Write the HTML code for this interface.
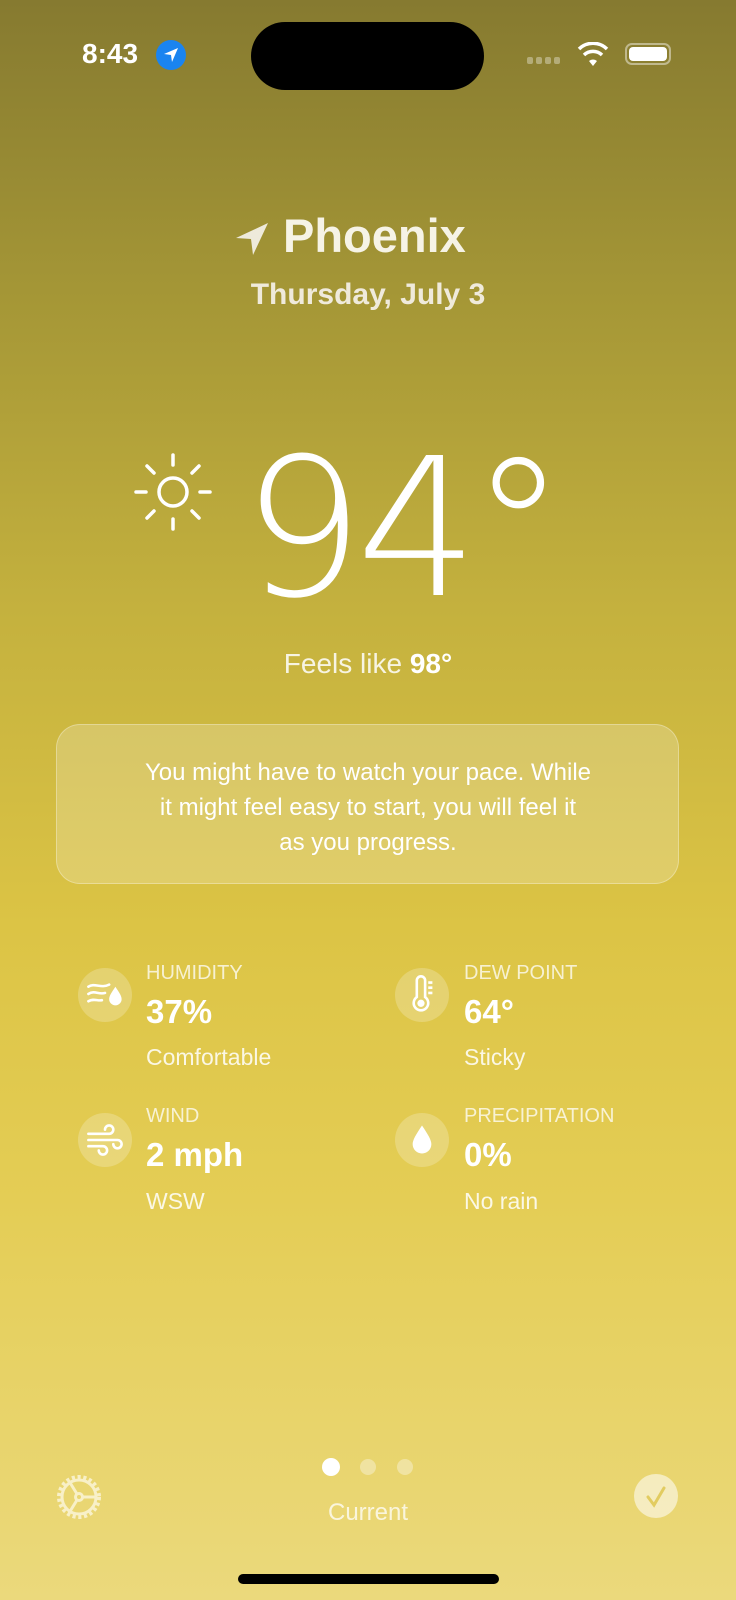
<!DOCTYPE html>
<html><head><meta charset="utf-8"><style>
*{margin:0;padding:0;box-sizing:border-box}
body{width:736px;height:1600px;overflow:hidden;font-family:"Liberation Sans",sans-serif;color:#fff;
background:linear-gradient(180deg,#867a30 0%,#a49636 18%,#c4b13e 38%,#dcc445 58%,#e4cd55 75%,#ebd97c 100%);position:relative}
.a{position:absolute}
.c{text-align:center;width:736px;left:0}
.lab{font-size:20px;color:rgba(255,255,255,.75)}
.val{font-size:33px;font-weight:bold}
.sub{font-size:23px;color:rgba(255,255,255,.85)}
.ic{width:54px;height:54px;border-radius:50%;background:rgba(255,255,255,.22)}
</style></head><body>
<div class="a" style="left:82px;top:38px;font-size:28px;font-weight:bold">8:43</div>
<div class="a" style="left:156px;top:40px;width:30px;height:30px;border-radius:50%;background:#1a84f0"><svg width="30" height="30" viewBox="0 0 30 30"><path d="M22 8 L8 14 L15 15 L16 22 Z" fill="#fff"/></svg></div>
<div class="a" style="left:251px;top:22px;width:233px;height:68px;border-radius:34px;background:#000"></div>
<div class="a" style="left:527px;top:51px;width:36px;height:7px;"><svg width="36" height="7"><g fill="rgba(255,255,255,.35)"><rect x="0" y="0" width="6" height="7" rx="2"/><rect x="9" y="0" width="6" height="7" rx="2"/><rect x="18" y="0" width="6" height="7" rx="2"/><rect x="27" y="0" width="6" height="7" rx="2"/></g></svg></div>
<svg class="a" style="left:577px;top:42px" width="32" height="26" viewBox="0 0 32 26"><path d="M16 24 L12 19 A6 6 0 0 1 20 19 Z" fill="#fff"/><path d="M7 13 A13 13 0 0 1 25 13" stroke="#fff" stroke-width="3.5" fill="none"/><path d="M2 7 A20 20 0 0 1 30 7" stroke="#fff" stroke-width="3.5" fill="none"/></svg>
<div class="a" style="left:625px;top:43px;width:46px;height:22px;border:2px solid rgba(255,255,255,.45);border-radius:7px;padding:2px"><div style="width:100%;height:100%;background:#fff;border-radius:4px"></div></div>
<svg class="a" style="left:234px;top:221px" width="36" height="36" viewBox="0 0 36 36"><path d="M34 2 L2 17 L17 18 L19 34 Z" fill="#eeeadb"/></svg>
<div class="a" style="left:283px;top:208px;font-size:47px;font-weight:bold;color:#f6f3e6">Phoenix</div>
<div class="a c" style="top:278px;font-size:30px;font-weight:bold;color:#efeadb">Thursday, July 3</div>
<svg class="a" style="left:131px;top:450px" width="84" height="84" viewBox="0 0 84 84"><g stroke="#fff" stroke-width="3.5" stroke-linecap="round" fill="none"><circle cx="42" cy="42" r="14"/><path d="M42 5v10M42 69v10M5 42h10M69 42h10M16 16l7 7M61 61l7 7M68 16l-7 7M23 61l-7 7"/></g></svg>
<div class="a" style="left:242px;top:424px;font-size:192px;font-family:'DejaVu Sans','Liberation Sans',sans-serif;font-weight:200;letter-spacing:-8px;line-height:1.1">94°</div>
<div class="a c" style="top:648px;font-size:28px;color:rgba(255,255,255,.85)">Feels like <b style="color:#fff">98°</b></div>
<div class="a" style="left:56px;top:724px;width:623px;height:160px;border-radius:24px;background:rgba(255,255,255,.2);border:1.5px solid rgba(255,255,255,.3)"></div>
<div class="a c" style="top:755px;font-size:24px;line-height:35px">You might have to watch your pace. While<br>it might feel easy to start, you will feel it<br>as you progress.</div>

<div class="a ic" style="left:78px;top:968px"><svg width="54" height="54" viewBox="0 0 52 52"><g stroke="#fff" stroke-width="2.5" fill="none" stroke-linecap="round"><path d="M10 18c6-4 12 2 20-2M10 25c6-4 10 1 16-1M10 32c5-3 9 0 13-1"/></g><path d="M36 18c4 6 6 9 6 12a6 6 0 0 1-12 0c0-3 2-6 6-12z" fill="#fff"/></svg></div>
<div class="a lab" style="left:146px;top:962px">HUMIDITY</div>
<div class="a val" style="left:146px;top:993px">37%</div>
<div class="a sub" style="left:146px;top:1044px">Comfortable</div>

<div class="a ic" style="left:395px;top:968px"><svg width="54" height="54" viewBox="0 0 52 52"><g stroke="#fff" stroke-width="2.5" fill="none"><path d="M21 12a4 4 0 0 1 8 0v16a7 7 0 1 1-8 0z"/><path d="M32 14h4M32 19h4M32 24h4"/></g><circle cx="25" cy="34" r="3.5" fill="#fff"/></svg></div>
<div class="a lab" style="left:464px;top:962px">DEW POINT</div>
<div class="a val" style="left:464px;top:993px">64°</div>
<div class="a sub" style="left:464px;top:1044px">Sticky</div>

<div class="a ic" style="left:78px;top:1113px"><svg width="54" height="54" viewBox="0 0 52 52"><g stroke="#fff" stroke-width="2.5" fill="none" stroke-linecap="round"><path d="M10 20h20a4 4 0 1 0-4-4M10 26h28a4 4 0 1 1-4 4M10 32h14a4 4 0 1 1-4 4"/></g></svg></div>
<div class="a lab" style="left:146px;top:1105px">WIND</div>
<div class="a val" style="left:146px;top:1136px">2 mph</div>
<div class="a sub" style="left:146px;top:1188px">WSW</div>

<div class="a ic" style="left:395px;top:1113px"><svg width="54" height="54" viewBox="0 0 52 52"><path d="M26 12c6 9 9 14 9 18a9 9 0 0 1-18 0c0-4 3-9 9-18z" fill="#fff"/></svg></div>
<div class="a lab" style="left:464px;top:1105px">PRECIPITATION</div>
<div class="a val" style="left:464px;top:1136px">0%</div>
<div class="a sub" style="left:464px;top:1188px">No rain</div>

<div class="a" style="left:322px;top:1458px;width:18px;height:18px;border-radius:50%;background:#fff"></div>
<div class="a" style="left:360px;top:1459px;width:16px;height:16px;border-radius:50%;background:rgba(255,255,255,.35)"></div>
<div class="a" style="left:397px;top:1459px;width:16px;height:16px;border-radius:50%;background:rgba(255,255,255,.35)"></div>
<div class="a c" style="top:1499px;font-size:24px;color:rgba(255,255,255,.75)">Current</div>
<svg class="a" style="left:53px;top:1471px" width="52" height="52" viewBox="0 0 52 52"><g stroke="#f8f0c8" stroke-width="3" fill="none"><circle cx="26" cy="26" r="19" stroke-dasharray="3 2.5" stroke-width="6"/><circle cx="26" cy="26" r="17"/><circle cx="26" cy="26" r="3.5"/><path d="M29 26h14M24 23l-8-13M24 29l-8 13"/></g></svg>
<div class="a" style="left:634px;top:1474px;width:44px;height:44px;border-radius:50%;background:rgba(255,255,255,.55)"><svg width="44" height="44" viewBox="0 0 44 44"><path d="M14 23l6 8 10-17" stroke="#e2cc60" stroke-width="3" fill="none" stroke-linecap="round"/></svg></div>
<div class="a" style="left:238px;top:1574px;width:261px;height:10px;border-radius:5px;background:#000"></div>
</body></html>
